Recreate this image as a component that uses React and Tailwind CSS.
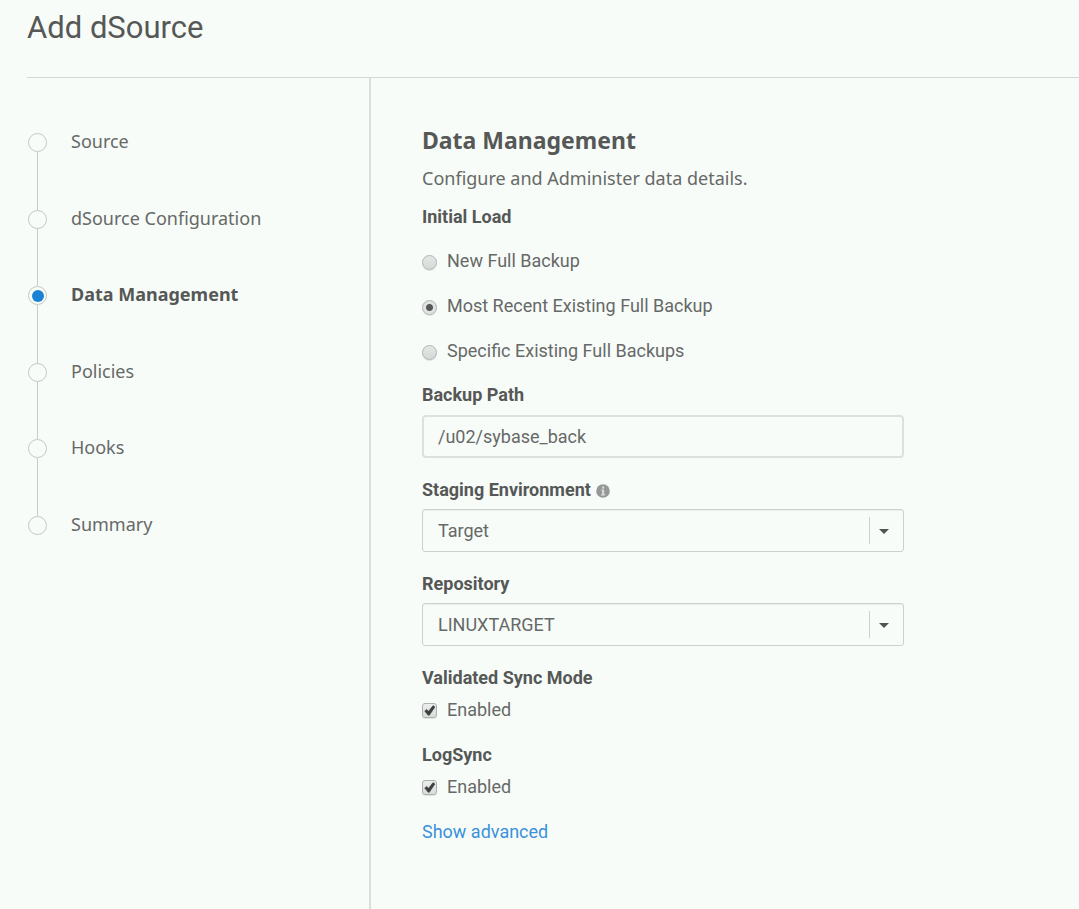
import { useState } from "react";

const STEPS = ["Source", "dSource Configuration", "Data Management", "Policies", "Hooks", "Summary"];
const LOADS = ["New Full Backup", "Most Recent Existing Full Backup", "Specific Existing Full Backups"];

function Steps({ current }) {
  return (
    <ol className="flex h-[402px] flex-col">
      {STEPS.map((step, i) => (
        <li
          key={step}
          aria-current={step === current ? "step" : undefined}
          className="flex flex-1 gap-6 last:flex-none"
        >
          <span className="flex w-[19px] flex-none flex-col items-center">
            <span className="flex size-[19px] flex-none items-center justify-center rounded-full border border-[#c5c9c6]">
              {step === current && <span className="size-3 rounded-full bg-[#1a82d2]" />}
            </span>
            {i < STEPS.length - 1 && <span className="w-px flex-1 bg-[#c8ccc9]" />}
          </span>
          <span
            className={
              step === current
                ? "h-[19px] font-['Noto_Sans',sans-serif] text-lg leading-4 font-bold text-[#555856]"
                : "h-[19px] font-['Noto_Sans',sans-serif] text-lg leading-4 text-[#666967]"
            }
          >
            {step}
          </span>
        </li>
      ))}
    </ol>
  );
}

function InfoIcon() {
  return (
    <svg viewBox="0 0 14 14" className="mt-px size-[14px]" aria-hidden="true">
      <circle cx="7" cy="7" r="6.8" fill="#959896" />
      <path d="M6 2.5h2.2v1.9H6zM5.2 5.6h3v4.6h1v1.2H5v-1.2h1V6.8h-.8z" fill="#d5d8d6" />
    </svg>
  );
}

function SelectField({ id, label, value, info }) {
  return (
    <div className="flex flex-col gap-[7px]">
      <div className="flex items-center gap-[5px]">
        <label htmlFor={id} className="font-bold text-[#555856]">
          {label}
        </label>
        {info && <InfoIcon />}
      </div>
      <div className="grid">
        <select
          id={id}
          defaultValue={value}
          className="col-start-1 row-start-1 h-[43px] w-full appearance-none rounded-[3px] border border-[#cdd1ce] bg-transparent px-[15px] shadow-[inset_0_1px_1px_#e9edea]"
        >
          <option>{value}</option>
        </select>
        <span className="pointer-events-none col-start-1 row-start-1 flex h-[27px] w-[35px] items-center self-center justify-self-end border-l border-[#cdd1ce] pl-[9px]">
          <svg viewBox="0 0 10 5" className="mt-[2px] h-[5px] w-[10px]" aria-hidden="true">
            <path d="M0 0h10L5 5z" fill="#515452" />
          </svg>
        </span>
      </div>
    </div>
  );
}

function CheckField({ id, label }) {
  const [on, setOn] = useState(true);
  return (
    <div role="group" aria-labelledby={id + "-title"} className="flex flex-col gap-2">
      <p id={id + "-title"} className="font-bold text-[#555856]">
        {label}
      </p>
      <div className="flex items-center gap-[10px]">
        <span className="mt-px grid size-[15px]">
          <input
            id={id}
            type="checkbox"
            checked={on}
            onChange={(e) => setOn(e.target.checked)}
            className="col-start-1 row-start-1 size-[15px] appearance-none rounded-[3px] border border-[#adb0ae] bg-linear-to-b from-[#eceeed] to-[#d9dcda] shadow-[0_1px_0_#e2e6e3]"
          />
          {on && (
            <svg
              viewBox="0 0 15 15"
              className="pointer-events-none col-start-1 row-start-1 size-[15px]"
              aria-hidden="true"
            >
              <path d="M2.7 8.1 4.6 6.4l2 1.8L11 2.6l2 1.4-5.6 8.2H6z" fill="#3d403e" stroke="#3d403e" strokeWidth=".5" />
            </svg>
          )}
        </span>
        <label htmlFor={id}>Enabled</label>
      </div>
    </div>
  );
}

export default function App() {
  return (
    <div className="flex min-h-screen flex-col bg-[#f8fcf9] font-[Roboto,sans-serif] text-lg leading-6 text-[#666967]">
      <header className="ml-[27px] border-b border-[#d3d8d4] pt-2 pb-[29px]">
        <h1 className="text-[31px] leading-10 text-[#555856]">Add dSource</h1>
      </header>
      <div className="flex flex-1">
        <nav aria-label="Steps" className="w-[371px] flex-none border-r-2 border-[#dce0dd] pt-[55px] pl-7">
          <Steps current="Data Management" />
        </nav>
        <main className="min-w-0 flex-1 pt-[46px] pr-6 pb-16 pl-[51px]">
          <form className="flex max-w-[482px] flex-col gap-5" onSubmit={(e) => e.preventDefault()}>
            <div>
              <h2 className="font-['Noto_Sans',sans-serif] text-[23px] leading-8 font-bold text-[#555856]">
                Data Management
              </h2>
              <p className="mt-[10px] font-['Noto_Sans',sans-serif]">Configure and Administer data details.</p>
              <fieldset className="mt-[15px] flex flex-col gap-[21px]">
                <legend className="mb-5 font-bold text-[#555856]">Initial Load</legend>
                {LOADS.map((load, i) => (
                  <label key={load} className="flex items-center gap-[10px]">
                    <input
                      type="radio"
                      name="initial-load"
                      defaultChecked={i === 1}
                      className="mt-[3px] size-[15px] appearance-none rounded-full border border-[#b1b4b2] bg-linear-to-b from-[#e5e8e6] to-[#d5d9d6] shadow-[0_1px_0_#e0e4e1] checked:bg-[radial-gradient(circle,#555856_3px,#e0e3e1_4px)]"
                    />
                    {load}
                  </label>
                ))}
              </fieldset>
            </div>
            <div className="flex flex-col gap-2">
              <label htmlFor="backup-path" className="font-bold text-[#555856]">
                Backup Path
              </label>
              <input
                id="backup-path"
                type="text"
                defaultValue="/u02/sybase_back"
                className="h-[43px] w-full rounded-[4px] border-2 border-[#dde1de] bg-transparent px-[14px]"
              />
            </div>
            <SelectField id="staging" label="Staging Environment" value="Target" info />
            <SelectField id="repository" label="Repository" value="LINUXTARGET" />
            <div className="flex flex-col gap-[21px]">
              <CheckField id="validated-sync" label="Validated Sync Mode" />
              <CheckField id="logsync" label="LogSync" />
              <a href="#advanced" className="self-start text-[#3a92da]">
                Show advanced
              </a>
            </div>
          </form>
        </main>
      </div>
    </div>
  );
}
